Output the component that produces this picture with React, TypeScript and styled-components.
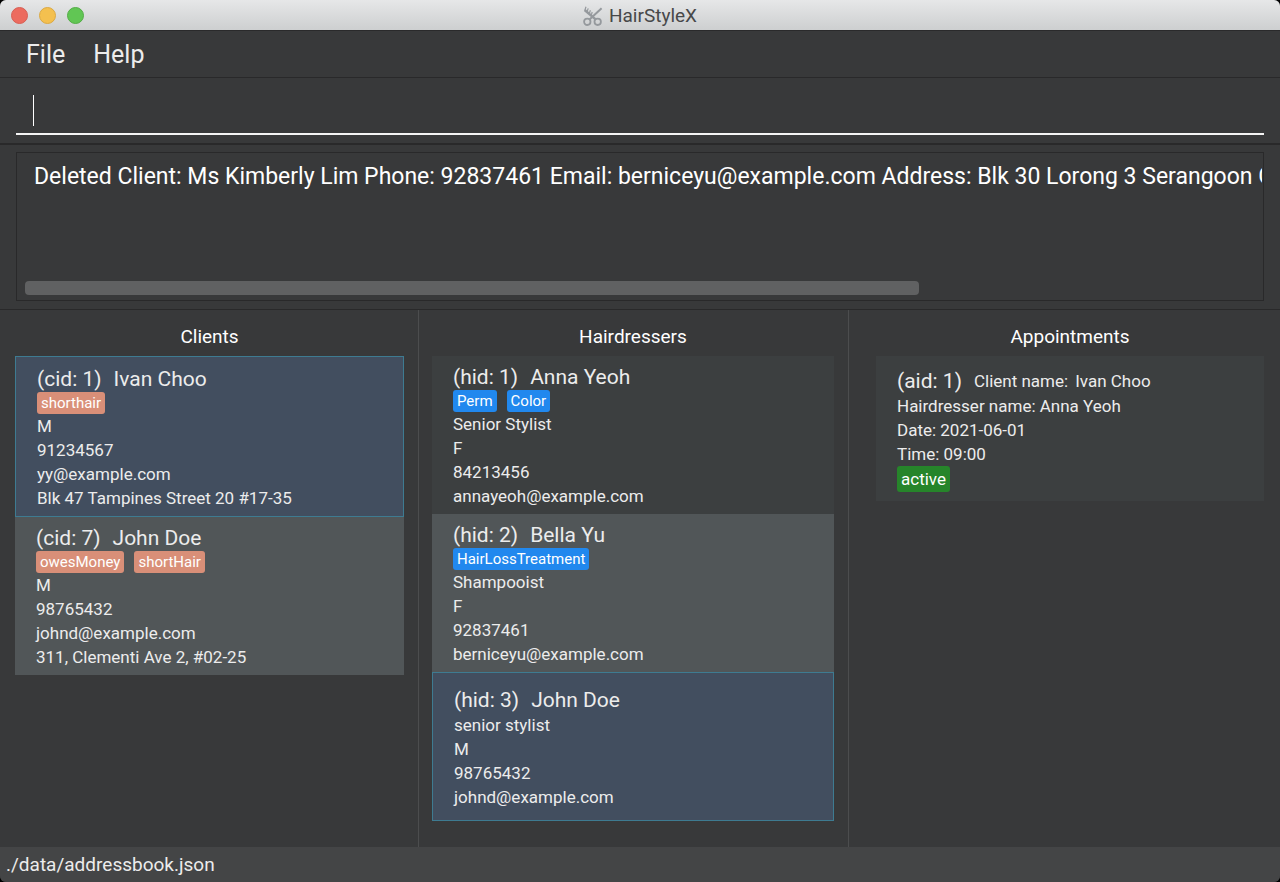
import React from "react";
import styled, { createGlobalStyle } from "styled-components";

const GlobalStyle = createGlobalStyle`
  * { box-sizing: border-box; }
  body {
    margin: 0;
    background: #000;
    font-family: Roboto, "Liberation Sans", sans-serif;
    color: #ececec;
  }
`;

const Window = styled.div`
  display: flex;
  flex-direction: column;
  min-height: 100vh;
  overflow: hidden;
  border-radius: 6px;
  background: #38393a;
`;

const TitleBar = styled.header`
  display: grid;
  grid-template-columns: 1fr auto 1fr;
  align-items: center;
  height: 31px;
  padding: 1px 11px 0;
  background: linear-gradient(#e6e7e8, #cdcfd0);
  border-bottom: 1px solid #2a2a2b;
`;

const Lights = styled.div`
  display: flex;
  gap: 11px;
`;

const Light = styled.button<{ $fill: string; $edge: string }>`
  width: 17px;
  height: 17px;
  padding: 0;
  border-radius: 50%;
  border: 1px solid ${(p) => p.$edge};
  background: ${(p) => p.$fill};
`;

const Title = styled.h1`
  display: flex;
  align-items: center;
  gap: 6px;
  margin: 0;
  font-size: 19px;
  line-height: 24px;
  font-weight: 400;
  color: #474849;
`;

const MenuBar = styled.nav`
  display: flex;
  gap: 28px;
  height: 47px;
  padding: 0 26px;
  border-bottom: 1px solid #29292a;
`;

const MenuButton = styled.button`
  padding: 0;
  border: 0;
  background: none;
  font: inherit;
  font-size: 25px;
  color: #ececec;
`;

const CommandPane = styled.div`
  padding: 9px 16px 8px;
  border-bottom: 2px solid #29292a;
`;

const CommandLine = styled.label`
  display: flex;
  align-items: center;
  height: 48px;
  padding-left: 17px;
  border-bottom: 2px solid #f4f4f4;
`;

const Caret = styled.span`
  width: 1px;
  height: 31px;
  background: #fff;
`;

const CommandInput = styled.input`
  flex: 1;
  min-width: 0;
  border: 0;
  outline: 0;
  background: none;
  font: inherit;
  font-size: 23px;
  color: #fff;
`;

const ResultPane = styled.div`
  padding: 7px 16px 8px;
  border-bottom: 1px solid #29292a;
`;

const ResultBox = styled.div`
  display: flex;
  flex-direction: column;
  height: 149px;
  padding: 8px 1px 5px;
  border: 1px solid #29292a;
`;

const ResultText = styled.textarea`
  flex: 1;
  width: 100%;
  padding: 0 0 0 16px;
  border: 0;
  outline: 0;
  resize: none;
  overflow: hidden;
  white-space: pre;
  background: none;
  font: inherit;
  font-size: 23px;
  line-height: 32px;
  color: #fff;
`;

const ScrollTrack = styled.div`
  padding: 0 12px 0 7px;
`;

const ScrollThumb = styled.div`
  width: 73%;
  height: 14px;
  border-radius: 4px;
  background: #606162;
`;

const Columns = styled.main`
  flex: 1;
  display: grid;
  grid-template-columns: 419fr 430fr 431fr;
`;

const Column = styled.section<{ $left: number; $right: number }>`
  min-width: 0;
  padding: 12px ${(p) => p.$right}px 24px ${(p) => p.$left}px;
  border-right: 1px solid #4c4d4e;
  &:last-child { border-right: 0; }
`;

const Heading = styled.h2`
  margin: 0 0 4px;
  font-size: 19px;
  line-height: 30px;
  font-weight: 400;
  text-align: center;
  color: #fff;
`;

const List = styled.ul`
  margin: 0;
  padding: 0;
  list-style: none;
`;

type Tone = "plain" | "alt" | "selected";
const toneColor: Record<Tone, string> = {
  plain: "#3c3f40",
  alt: "#515658",
  selected: "#424e5f",
};

const Card = styled.li<{ $tone: Tone; $min?: number }>`
  display: flex;
  flex-direction: column;
  justify-content: center;
  min-height: ${(p) => p.$min ?? 145}px;
  padding: 8px 21px 6px;
  background: ${(p) => toneColor[p.$tone]};
  border: ${(p) => (p.$tone === "selected" ? "1px solid #3e7b91" : "0")};
`;

const CardTitle = styled.h3`
  display: flex;
  align-items: center;
  gap: 12px;
  margin: 0;
  font-size: 21px;
  line-height: 26px;
  font-weight: 400;
`;

const Line = styled.div`
  font-size: 17px;
  line-height: 24px;
`;

const InlineLine = styled.span`
  display: flex;
  gap: 7px;
  font-size: 17px;
`;

const Tags = styled.div`
  display: flex;
  gap: 10px;
`;

const Tag = styled.span<{ $color: string; $large?: boolean }>`
  padding: 0 4px;
  border-radius: 3px;
  background: ${(p) => p.$color};
  font-size: ${(p) => (p.$large ? 17 : 15)}px;
  line-height: ${(p) => (p.$large ? 26 : 22)}px;
  color: #fff;
`;

const StatusBar = styled.footer`
  height: 35px;
  padding: 0 6px;
  background: #444546;
  font-size: 19px;
  line-height: 36px;
`;

const SALMON = "#d98f78";
const BLUE = "#2188ee";
const GREEN = "#26852a";

type Person = {
  id: string;
  name: string;
  tags: string[];
  lines: string[];
  tone: Tone;
  min?: number;
};

const clients: Person[] = [
  {
    id: "(cid: 1)",
    name: "Ivan Choo",
    tags: ["shorthair"],
    lines: ["M", "91234567", "yy@example.com", "Blk 47 Tampines Street 20 #17-35"],
    tone: "selected",
    min: 161,
  },
  {
    id: "(cid: 7)",
    name: "John Doe",
    tags: ["owesMoney", "shortHair"],
    lines: ["M", "98765432", "johnd@example.com", "311, Clementi Ave 2, #02-25"],
    tone: "alt",
  },
];

const hairdressers: Person[] = [
  {
    id: "(hid: 1)",
    name: "Anna Yeoh",
    tags: ["Perm", "Color"],
    lines: ["Senior Stylist", "F", "84213456", "annayeoh@example.com"],
    tone: "plain",
  },
  {
    id: "(hid: 2)",
    name: "Bella Yu",
    tags: ["HairLossTreatment"],
    lines: ["Shampooist", "F", "92837461", "berniceyu@example.com"],
    tone: "alt",
  },
  {
    id: "(hid: 3)",
    name: "John Doe",
    tags: [],
    lines: ["senior stylist", "M", "98765432", "johnd@example.com"],
    tone: "selected",
    min: 149,
  },
];

function ScissorsIcon() {
  return (
    <svg width="20" height="20" viewBox="0 0 20 20" fill="none" stroke="#95999d" aria-hidden="true">
      <circle cx="4.3" cy="15.8" r="3.2" strokeWidth="1.8" />
      <circle cx="14.7" cy="15.8" r="3.2" strokeWidth="1.8" />
      <path d="M6.5 13.4 18.6 2.2" strokeWidth="2" />
      <path d="M12.6 13.4 1.6 4" strokeWidth="2.4" />
      <path d="M1.8 4.4 3 .8M4 6 5.2 2.4M6.2 7.8 7.4 4.2M8.2 9.4 9.2 6" strokeWidth="1.2" />
    </svg>
  );
}

function PersonCard({ person, color }: { person: Person; color: string }) {
  return (
    <Card $tone={person.tone} $min={person.min}>
      <CardTitle>
        <span>{person.id}</span>
        <span>{person.name}</span>
      </CardTitle>
      {person.tags.length > 0 && (
        <Tags>
          {person.tags.map((t) => (
            <Tag key={t} $color={color}>{t}</Tag>
          ))}
        </Tags>
      )}
      {person.lines.map((l) => (
        <Line key={l}>{l}</Line>
      ))}
    </Card>
  );
}

export default function App() {
  return (
    <Window>
      <GlobalStyle />
      <TitleBar>
        <Lights>
          <Light aria-label="Close" $fill="#ec6b5f" $edge="#d75f54" />
          <Light aria-label="Minimize" $fill="#f4c04f" $edge="#dba943" />
          <Light aria-label="Zoom" $fill="#61c654" $edge="#53ad46" />
        </Lights>
        <Title>
          <ScissorsIcon />
          HairStyleX
        </Title>
      </TitleBar>
      <MenuBar>
        <MenuButton>File</MenuButton>
        <MenuButton>Help</MenuButton>
      </MenuBar>
      <CommandPane>
        <CommandLine>
          <Caret />
          <CommandInput type="text" aria-label="Command" />
        </CommandLine>
      </CommandPane>
      <ResultPane>
        <ResultBox>
          <ResultText
            readOnly
            wrap="off"
            aria-label="Result"
            value="Deleted Client: Ms Kimberly Lim Phone: 92837461 Email: berniceyu@example.com Address: Blk 30 Lorong 3 Serangoon G"
          />
          <ScrollTrack>
            <ScrollThumb />
          </ScrollTrack>
        </ResultBox>
      </ResultPane>
      <Columns>
        <Column $left={15} $right={14}>
          <Heading>Clients</Heading>
          <List>
            {clients.map((c) => (
              <PersonCard key={c.id} person={c} color={SALMON} />
            ))}
          </List>
        </Column>
        <Column $left={13} $right={14}>
          <Heading>Hairdressers</Heading>
          <List>
            {hairdressers.map((h) => (
              <PersonCard key={h.id} person={h} color={BLUE} />
            ))}
          </List>
        </Column>
        <Column $left={27} $right={16}>
          <Heading>Appointments</Heading>
          <List>
            <Card $tone="plain">
              <CardTitle>
                <span>(aid: 1)</span>
                <InlineLine>
                  <span>Client name:</span>
                  <span>Ivan Choo</span>
                </InlineLine>
              </CardTitle>
              <Line>Hairdresser name: Anna Yeoh</Line>
              <Line>Date: 2021-06-01</Line>
              <Line>Time: 09:00</Line>
              <Tags>
                <Tag $color={GREEN} $large>active</Tag>
              </Tags>
            </Card>
          </List>
        </Column>
      </Columns>
      <StatusBar>./data/addressbook.json</StatusBar>
    </Window>
  );
}
